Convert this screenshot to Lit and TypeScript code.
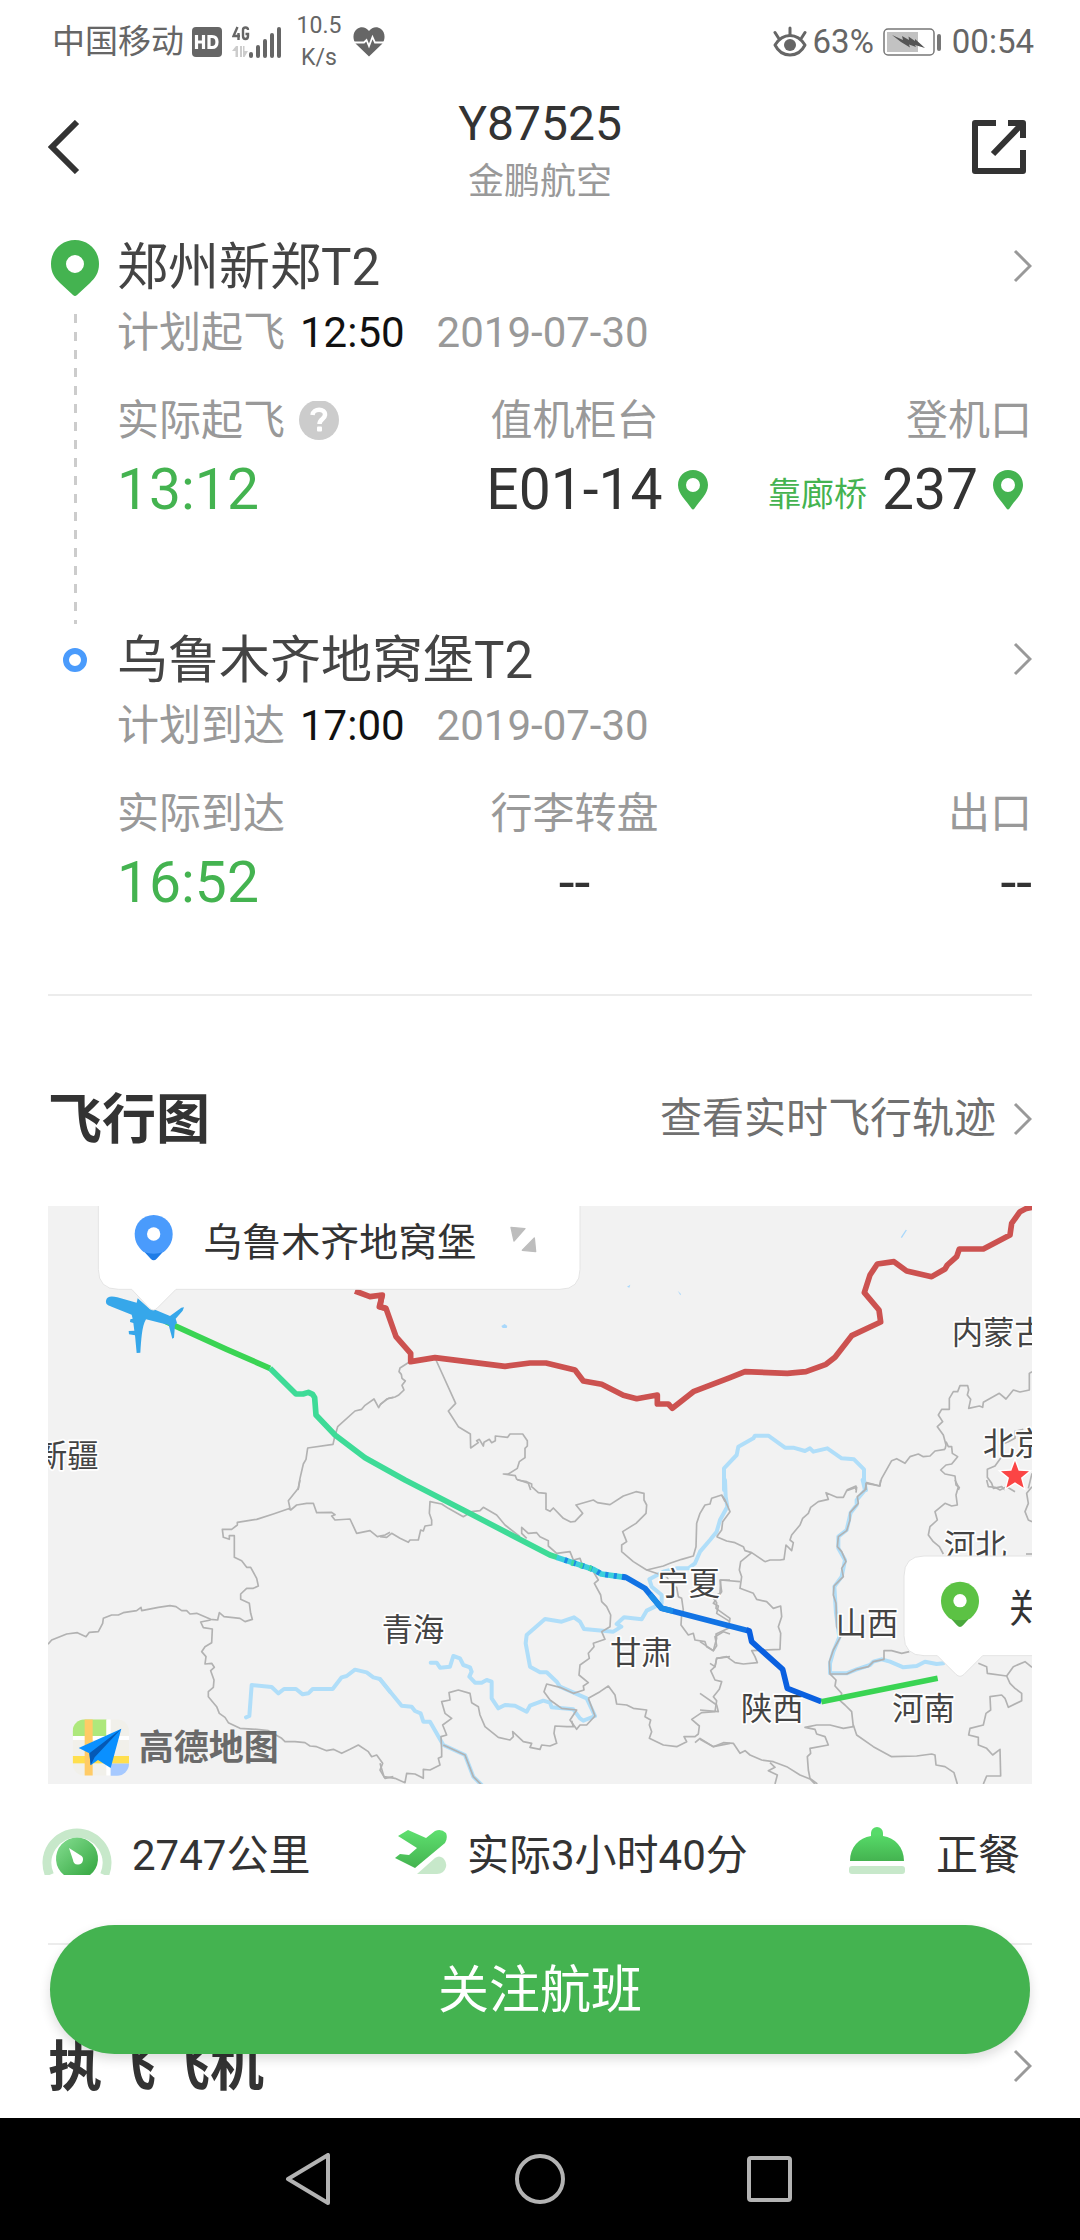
import { LitElement, html, svg, css, nothing } from "lit";
import { customElement, property } from "lit/decorators.js";

const chevron = html`<svg class="chevron" width="20" height="34" viewBox="0 0 20 34" aria-hidden="true">
  <path d="M3 2 L18 17 L3 32" fill="none" stroke="#999" stroke-width="3" />
</svg>`;

const smallPin = html`<svg width="30" height="40" viewBox="0 0 30 40" aria-hidden="true">
  <path fill="#44b350" fill-rule="evenodd"
    d="M15 0 C6.500 0 0 6.500 0 15 C0 24 8 30 13.500 38.500 Q15 40.500 16.500 38.500 C22 30 30 24 30 15 C30 6.500 23.500 0 15 0 Z M15 8 a7 7 0 1 1 0 14 a7 7 0 1 1 0 -14 Z" />
</svg>`;

/* The map is drawn on a 2952 x 1734 canvas, split into six tiles. */
type Tile = { x: number; y: number; borders?: string[]; rivers?: string[]; frontier?: string[] };

const tiles: Tile[] = [
  {
    x: -24, y: -48,
    borders: ["774,900 780,865 790,822 798,808 803,774 879,763 883,745 893,710 945,663 965,658 975,646 1002,627 1016,653 1022,642 1045,625 1060,622"],
    frontier: ["945,303 990,320 1027,315 1018,350 1035,355"],
  },
  {
    x: 996, y: -48,
    borders: [
      "0,645 20,627 45,621 55,616 72,600 66,586 76,573 66,565 64,553 57,545 60,534 88,516",
      "168,510 227,640 205,663 235,710 271,732 272,774 295,758 290,752 298,748 310,768 312,757 328,748 335,758 346,752 346,738 383,742 390,732 428,732 442,752 442,768 435,775 435,803 418,815 412,835 385,852 370,852 406,857 410,868 445,880 452,900",
    ],
    frontier: ["7,310 0,350 18,355 48,440 92,490 92,515 165,503 375,529 450,519 498,519 585,540 610,573 665,583 730,616 770,626 832,615 832,642 865,642 877,655 940,605 1050,563 1095,545 1222,550 1278,545 1338,523 1365,502 1415,437 1502,396 1497,360 1453,308 1470,255 1492,222 1542,215 1580,243 1655,260 1695,237 1702,225 1730,200 1738,177 1810,177 1890,135 1895,100 1920,65 1940,55 1970,50"],
  },
  {
    x: 1956, y: -48,
    borders: [
      "996,545 988,550 988,600 960,606 940,600 918,627 898,610 850,637 848,652 838,648 806,655 812,628 802,615 806,600 803,587 780,587 773,605 760,605 748,625 748,658 725,658 715,675 728,695 712,710 730,735 738,765 735,778",
      "738,755 745,770 755,770 757,790 773,800 755,822 738,825 722,840 735,852 765,858 768,885 778,892 775,900",
      "498,900 498,880 520,884 538,888 545,865 575,812 590,806 615,820 630,800 655,792 670,800 690,798 705,783 735,778",
      "996,850 985,895",
      "970,718 945,724 945,745 925,755 900,765 905,800 885,828 862,838 862,862 875,880 880,895 905,890 915,900",
      "440,900 468,888 468,900",
    ],
    rivers: ["72,900 72,835 110,795 115,770 160,745 165,737 205,737 255,773 280,773 315,783 330,775 340,785 382,775 425,805 462,808 492,838 492,870 498,900"],
  },
  {
    x: -24, y: 822,
    borders: [
      "24,493 35,480 80,462 112,458 138,470 148,457 175,455 188,430 190,415 215,405 235,405 250,398 290,392 303,382 305,392 355,382 390,377 408,380 425,392 440,392 450,402 470,400 512,418 533,420 538,398 552,410 600,415 615,425 637,418 632,400 628,370 602,358 602,342 620,325 640,325 655,318 650,295 632,262 620,262 605,242 583,232 583,167 568,167 568,178 550,172 547,148 575,148 592,135 592,127 650,118 700,102 750,85 745,62 775,25 780,0",
      "745,85 752,90 770,75 800,70 820,70 830,98 875,97 885,104 875,108 885,120 930,117 950,160 990,152 1012,170 1035,165 1050,157",
      "512,420 482,426 490,443 517,447 515,488 495,500 485,515 498,530 495,552 515,550 523,562 512,572 522,600 520,622 505,635 505,650 530,680 538,700 555,712 565,728 600,745 650,748 685,752 725,775 735,785 765,785 795,788 810,798 830,800 860,812 880,808 905,820 930,808 955,795 985,815 995,830 1010,825 1028,850 1020,870 1035,895 1060,890",
    ],
    rivers: ["618,712 628,708 635,615 695,621 715,640 732,627 768,627 788,643 805,640 818,627 878,627 905,592 920,588 945,569 980,577 1000,592 1020,597 1050,635"],
  },
  {
    x: 996, y: 822,
    borders: [
      "412,0 440,5 455,12 455,20 475,38 498,40 498,88 510,94 520,84 550,115 572,126 585,124 608,100 588,75 640,60 652,68 690,74 730,48 768,35 792,40 792,60 800,75 798,100 768,130 728,155 740,185 725,195 725,215 760,245 800,270 850,258 870,250 905,238 940,228 948,200 950,130 960,100 975,75 990,72 995,55 1025,45 1035,65",
      "0,170 20,172 35,160 60,175 85,187 90,180 115,180 122,150 130,153 135,138 155,135 155,120 148,100 150,65 185,72 205,85 250,110 275,95 300,92 310,82 350,105 375,135 420,170",
      "440,175 425,160 425,142 445,160 470,158 480,170 505,182 505,198 530,220 570,215 580,240 600,235 605,250",
      "640,275 655,300 643,310 662,345 665,365 680,380 692,405 690,440 665,455 675,478 640,490 642,500 625,520 628,535 600,555 597,585 625,608 610,618 612,630 580,640 540,622 500,612 492,635 510,660 545,685 590,690 570,720 590,748 600,735 620,735 645,708 625,655",
      "800,270 860,290 875,318 890,322 895,350 905,355 910,390 905,400 903,435 925,465 940,460 945,480 975,485 980,500 1000,512 1010,497 1005,470 1030,455 1050,462",
      "1050,300 1020,300 1025,335 1000,370 1015,378 1010,400 1050,425",
      "1050,530 1010,535 1005,560 992,572 1005,600 1025,605 1018,628 1000,650 1010,662 1005,695 965,698 935,718 958,738 955,762 945,770 912,770 920,785 890,800 850,795 808,775 815,755 808,735 812,720 795,710 800,690 760,685 740,675 710,672 705,645 685,618 660,635 625,655",
      "945,788 960,775 1000,800 1050,790",
      "185,810 183,770 200,765 188,735 215,715 195,700 185,665 210,660 207,638 235,630 270,640 275,668 295,680 300,705 315,740 355,772 390,780 400,770 398,755 430,785 455,790 450,802 480,808 485,795 510,798 530,790 522,760 525,738 560,740 580,740 575,722",
      "185,810 185,830 175,835 180,855 150,870 130,868 130,895 105,882 80,880 75,908 45,895 12,890 0,850",
      "190,795 255,825 280,890 305,915",
    ],
    rivers: [
      "1035,0 1037,50 1042,80 1020,120 1010,155 990,180 960,215 945,250 925,265 890,265 850,275 808,298 815,320 845,345 845,370 800,392 785,418 732,412 710,432 724,440 700,455 612,447 600,425 582,412 545,425 495,417 440,465 437,490 450,560 480,577 500,577 530,605 540,620 620,655 645,708 610,722 600,715 580,688 515,682 510,668 490,662 450,677 440,695 405,677 375,675 355,685 335,655 335,605 320,600 305,608 285,608 268,590 275,575 270,562 250,555 240,535 220,528 210,560 180,563 170,548 152,548",
      "0,598 65,677 95,680 105,693 122,700 130,725 150,725 190,795 255,825 280,890 305,915",
    ],
  },
  {
    x: 1956, y: 822,
    borders: [
      "50,170 65,150 68,125 90,95 75,60 65,45",
      "50,170 80,183 105,188 130,200 135,212 155,218 195,245 210,240 240,240 252,238 258,195 275,212 280,188 270,180 275,165 300,135 308,115 325,100 332,82 355,65 385,58 378,38 410,52 430,52 440,32 470,22 468,38",
      "155,218 122,245 118,270 125,290 120,325 160,340 170,358 200,365 220,385 242,378 245,410 235,440 242,460 240,508 155,512 165,530 172,548 130,552 105,548 80,530 50,535 45,560 30,550",
      "120,305 62,300 60,340 38,352 50,368 48,385 90,415 85,445 48,462 50,475 40,512 0,485",
      "765,0 775,20 768,45 772,75 755,78 735,70 705,95 712,120 690,140 685,165 700,185 718,200 730,222",
      "860,0 865,20 885,22 900,30 920,20 945,35",
      "996,20 980,40 985,70 975,95 985,120 996,125",
      "978,222 996,222",
      "835,550 860,560 862,580 920,588 940,560 975,545 996,562",
      "920,588 930,610 945,625 965,640 965,662 925,682 915,655 905,645 870,650 872,690 858,700 850,735 810,745 806,765 835,772 835,795 860,805 878,825 900,808 902,888 860,888 850,912",
      "390,582 408,600 405,618 425,640 420,662 435,675 455,695 460,740 430,745 390,735 350,735 315,742 345,748 350,762 375,770 385,795 330,805 332,820 322,830 325,870 330,895 352,912",
      "460,735 470,765 520,800 575,830 650,828 695,822 705,825 708,855 735,860 762,878 772,912",
      "0,778 40,800 70,788 100,790 120,820 135,812 150,825 185,840 220,845 260,860 300,885 330,897 345,912",
      "210,848 225,862 205,872 232,885 225,912",
      "628,515 605,520 575,512 552,512 552,538 520,545 505,560 470,568 440,582 390,582 388,545 400,510 422,470 410,440 408,370 400,345 402,318 430,290 425,265 438,245 425,215 412,200 415,170 440,152 450,120 450,98 475,70 472,50 495,30 500,8 540,18 542,0",
      "0,690 55,695 50,675 0,640",
    ],
    rivers: [
      "488,0 495,30 470,60 470,75 452,98 440,150 415,170 415,205 435,240 425,290 403,320 408,400 418,472 400,515 390,550 390,580 440,580 470,568 510,555 520,545 545,538 570,545 610,562 650,558 675,545 710,552 730,550",
    ],
  },
];

const places: [string, number, number][] = [
  ["新疆", -36, 783],
  ["内蒙古", 2711, 415],
  ["北京", 2805, 746],
  ["宁夏", 1828, 1166],
  ["青海", 1001, 1306],
  ["甘肃", 1686, 1374],
  ["山西", 2363, 1286],
  ["陕西", 2079, 1543],
  ["河南", 2533, 1543],
  ["河北", 2688, 1052],
];

@customElement("route-map")
export class RouteMap extends LitElement {
  static styles = css`
    :host { display: block; overflow: hidden; background: #f2f2f2; }
    .canvas { display: block; width: 100%; height: auto; font-family: Roboto, "Noto Sans CJK SC", sans-serif; }
    .border { fill: none; stroke: #b2b2b2; stroke-width: 5; stroke-linejoin: round; }
    .river { fill: none; stroke: #b0def9; stroke-width: 12; stroke-linejoin: round; stroke-linecap: round; }
    .frontier { fill: none; stroke: #cc5250; stroke-width: 17; stroke-linejoin: round; }
    .route { fill: none; stroke-width: 17; stroke-linejoin: round; }
    .place { font-size: 94px; fill: #444; stroke: #fff; stroke-width: 10; stroke-linejoin: round; paint-order: stroke; }
    .callout { fill: #fff; stroke: #e4e4e4; stroke-width: 3; }
    .airport { font-size: 117px; fill: #333; }
    .brand { font-size: 105px; font-weight: 700; fill: #6a6a6a; }
  `;

  private pin(x: number, y: number, body: string, tip: string) {
    return svg`<g transform="translate(${x} ${y})">
      <path fill=${tip} d="M-42 38 L-9 74 Q0 84 9 74 L42 38 Z" />
      <path fill=${body} d="M0 -57 C32 -57 57 -32 57 0 C57 26 44 42 30 54 Q0 64 -30 54 C-44 42 -57 26 -57 0 C-57 -32 -32 -57 0 -57 Z" />
      <circle r="20" fill="#fff" />
    </g>`;
  }

  private lines(kind: "borders" | "rivers" | "frontier", cls: string) {
    return tiles.map((t) => svg`<g transform="translate(${t.x} ${t.y})">
      ${(t[kind] ?? []).map((p) => svg`<polyline class=${cls} points=${p} />`)}
    </g>`);
  }

  render() {
    return html`<svg class="canvas" viewBox="0 0 2952 1734" role="img" aria-label="飞行图">
      ${this.lines("rivers", "river")}
      ${this.lines("borders", "border")}
      ${this.lines("frontier", "frontier")}
      <g fill="#a9d8fb">
        <path d="M1360 360 l10 -6 l8 6 l-2 6 l-12 0 Z M1737 242 l10 -6 l-3 9 Z M1889 254 l10 10 l-2 4 Z" />
        <path d="M2560 95 l15 -23" stroke="#a9d8fb" stroke-width="4" />
      </g>
      ${places.map(([name, x, y]) => svg`<text class="place" x=${x} y=${y}>${name}</text>`)}
      <path fill="#fb4545" stroke="#fff" stroke-width="8" paint-order="stroke"
        d="M2901 765 L2912 794 L2943 796 L2919 815 L2927 845 L2901 829 L2875 845 L2883 815 L2859 796 L2890 794 Z" />

      <polyline class="route" stroke="#3ad453" points="350,345 386,362 536,430 666,487" />
      <polyline class="route" stroke="#3edb97" points="666,487 744,564 765,564 781,559 794,565 800,575 804,627 861,687 951,755 1071,822 1246,912 1506,1047 1530,1055" />
      <polyline class="route" stroke="#3bd0dc" points="1526,1054 1636,1090 1660,1104 1731,1114" />
      <polyline class="route" stroke="#1c8ae6" stroke-dasharray="9 17" points="1550,1062 1636,1090 1660,1104 1731,1114" />
      <polyline class="route" stroke="#3edba0" stroke-dasharray="8 20" points="1570,1070 1636,1090" />
      <polyline class="route" stroke="#1273e4" points="1722,1112 1734,1114 1791,1147 1841,1207 1956,1237 2101,1274" />
      <polyline class="route" stroke="#1c8ce8" points="1806,1165 1841,1207 1875,1215" />
      <polyline class="route" stroke="#0a60e0" points="2095,1272 2104,1275 2111,1307 2204,1390 2218,1447 2320,1487" />
      <polyline class="route" stroke="#3ad453" points="2320,1487 2669,1417" />

      <path fill="#36a7ea" transform="translate(-24 -48)"
        d="M198 332 C200 318 215 318 232 322 L290 338 L293 325 L330 358 L347 360 L390 378 L424 353 L432 352 L428 362 L407 386 L411 398 L405 405 L402 443 L397 446 L386 405 L318 388 C305 410 304 450 301 488 L290 489 L285 436 L267 433 L266 423 L283 422 L280 399 L270 396 L271 388 L278 386 L275 374 L215 350 C200 345 197 340 198 332 Z" />

      <path class="callout" d="M151 -20 V190 Q151 250 211 250 H251 L304 306 Q316 318 328 306 L384 250 H1536 Q1596 250 1596 190 V-20 Z" />
      ${this.pin(317, 84, "#4a9bfc", "#1f7ce6")}
      <text class="airport" x="466" y="149">乌鲁木齐地窝堡</text>
      <path fill="#bdbdbd" stroke="#bdbdbd" stroke-width="4" stroke-linejoin="round"
        d="M1389 64 L1431 68 L1398 105 Z M1463 137 L1423 133 L1459 96 Z" />

      <path class="callout" d="M2980 1050 H2628 Q2568 1050 2568 1110 V1289 Q2568 1349 2628 1349 H2668 L2724 1405 Q2736 1417 2748 1405 L2804 1349 H2980 Z" />
      ${this.pin(2736, 1184, "#5cc244", "#4aa83c")}
      <text class="airport" x="2884" y="1247">郑</text>

      <g transform="translate(74 1540)">
        <clipPath id="tile"><rect width="169" height="169" rx="36" /></clipPath>
        <g clip-path="url(#tile)">
          <rect width="169" height="169" fill="#f1f0ea" />
          <rect width="102" height="52" fill="#aee87c" />
          <rect x="101" width="13" height="169" fill="#fff" />
          <rect y="50" width="169" height="12" fill="#fff" />
          <rect x="114" y="132" width="55" height="40" fill="#a6c9ff" />
          <rect y="110" width="169" height="22" fill="#ffdf4d" />
          <rect x="36" width="24" height="169" fill="#ffcb66" />
        </g>
        <path fill="#0a90ff" d="M146 28 L18 86 L50 102 L54 138 L76 122 L114 146 Z" />
        <path fill="#0559b5" d="M146 28 L50 102 L54 138 L66 114 Z" />
      </g>
      <text class="brand" x="272" y="1661">高德地图</text>
    </svg>`;
  }
}

interface Fact {
  label: string;
  value: string;
  tone?: string;
  note?: string;
  help?: boolean;
  pin?: boolean;
}

@customElement("flight-leg")
export class FlightLeg extends LitElement {
  @property() place = "";
  @property() planLabel = "";
  @property() planTime = "";
  @property() date = "";
  @property({ type: Boolean }) origin = false;
  @property({ attribute: false }) facts: Fact[] = [];

  static styles = css`
    :host { display: block; }
    * { box-sizing: border-box; }
    button { border: 0; background: none; padding: 0; font: inherit; color: inherit; display: block; }
    svg { display: block; }
    .leg { display: grid; grid-template-columns: 54px 1fr; column-gap: 15px; }
    .rail { display: flex; flex-direction: column; align-items: center; }
    .pin { margin: 5px 0 18px; }
    .dashes { width: 3px; flex: 1; margin-bottom: 4px; background: repeating-linear-gradient(#ccc 0 9px, transparent 9px 18px); }
    .ring { width: 24px; height: 24px; border: 6px solid #4a9bfc; border-radius: 50%; margin-top: 20px; }
    .title { display: flex; align-items: flex-start; justify-content: space-between; color: #444; text-decoration: none; font-size: 51px; line-height: 66px; }
    .chevron { margin-top: 14px; }
    .name { margin: 0; font: inherit; }
    .plan { display: flex; margin: 8px 0 0; font-size: 42px; line-height: 48px; color: #999; }
    .time { color: #111; margin-left: 15px; }
    .date { margin-left: 32px; }
    .facts { display: grid; grid-template-columns: 1fr auto 1fr; margin: 40px 0 0; }
    .origin .facts { margin-bottom: 106px; }
    .fact { display: flex; flex-direction: column; gap: 13px; }
    .fact:nth-child(2) { align-items: center; }
    .fact:nth-child(3) { align-items: flex-end; }
    .label { display: flex; align-items: center; gap: 14px; margin: 0; font-size: 42px; line-height: 48px; color: #999; }
    .value { display: flex; align-items: center; margin: 0; font-size: 57px; line-height: 64px; color: #333; white-space: nowrap; }
    .green { color: #44b350; }
    .note { font-size: 33px; margin-right: 15px; padding-top: 10px; line-height: 48px; color: #44b350; }
    .locate { margin-left: 15px; }
    .fact:nth-child(2) .locate { margin-right: -45px; }
    .fact:nth-child(3) .locate { margin-right: 9px; }
  `;

  render() {
    return html`<article class="leg ${this.origin ? "origin" : ""}">
      <div class="rail">
        ${this.origin
          ? html`<svg class="pin" width="48" height="56" viewBox="0 0 48 56" aria-hidden="true">
                <path fill="#44b350" fill-rule="evenodd"
                  d="M24 0 C10.500 0 0 10.500 0 24 C0 33 4 38 9 43 L22 55 Q24 57 26 55 L39 43 C44 38 48 33 48 24 C48 10.500 37.500 0 24 0 Z M24 15 a9 9 0 1 1 0 18 a9 9 0 1 1 0 -18 Z" />
              </svg>
              <span class="dashes"></span>`
          : html`<span class="ring"></span>`}
      </div>
      <div>
        <a class="title" href="#airport"><h2 class="name">${this.place}</h2>${chevron}</a>
        <p class="plan"><span>${this.planLabel}</span><span class="time">${this.planTime}</span><span class="date">${this.date}</span></p>
        <dl class="facts">
          ${this.facts.map((f) => html`<div class="fact">
            <dt class="label">${f.label}${f.help
              ? html`<button aria-label="说明"><svg width="40" height="40" viewBox="0 0 40 40">
                  <circle cx="20" cy="19" r="20" fill="#ccc" />
                  <path d="M13.500 14 C14 7 26.500 7 26 14 C25.800 18 20.500 18 20.500 23" fill="none" stroke="#fff" stroke-width="4.500" />
                  <rect x="18" y="25.500" width="5" height="5" rx="1" fill="#fff" />
                </svg></button>` : nothing}</dt>
            <dd class="value ${f.tone ?? ""}">${f.note ? html`<span class="note">${f.note}</span>` : nothing}${f.value}${f.pin
              ? html`<button class="locate" aria-label=${f.label}>${smallPin}</button>` : nothing}</dd>
          </div>`)}
        </dl>
      </div>
    </article>`;
  }
}

const departure: Fact[] = [
  { label: "实际起飞", value: "13:12", tone: "green", help: true },
  { label: "值机柜台", value: "E01-14", pin: true },
  { label: "登机口", value: "237", note: "靠廊桥", pin: true },
];

const arrival: Fact[] = [
  { label: "实际到达", value: "16:52", tone: "green" },
  { label: "行李转盘", value: "--" },
  { label: "出口", value: "--" },
];

@customElement("app-root")
export class AppRoot extends LitElement {
  static styles = css`
    :host {
      display: flex; flex-direction: column; height: 100vh; overflow: hidden;
      background: #fff; color: #333;
      font-family: Roboto, "Noto Sans CJK SC", sans-serif;
    }
    * { box-sizing: border-box; }
    button { border: 0; background: none; padding: 0; font: inherit; color: inherit; display: block; }
    svg { display: block; flex: none; }
    .status { display: flex; align-items: center; height: 84px; padding: 0 46px 0 52px; font-size: 33px; line-height: 40px; color: #666; }
    .hd { margin-left: 8px; }
    .signal { margin: 0 13px 0 10px; }
    .rate { width: 46px; font-size: 23px; line-height: 32px; text-align: center; margin-right: 11px; }
    .spacer { flex: 1; }
    .battery { margin: 0 10px 0 9px; }
    .eye { margin-right: 6px; }
    .header { display: flex; align-items: center; justify-content: space-between; padding: 12px 48px 4px; }
    .tool { padding-bottom: 8px; width: 60px; }
    .heading { text-align: center; }
    .flight { margin: 0; font-size: 48px; line-height: 56px; font-weight: 400; }
    .airline { margin: 6px 0 0; font-size: 36px; line-height: 48px; color: #999; }
    .stage { position: relative; flex: 1; min-height: 0; display: flex; flex-direction: column; }
    .content { flex: 1; min-height: 0; overflow: hidden; padding: 25px 48px 0; }
    .rule { height: 2px; border: 0; margin: 0; background: #ececec; }
    .after-legs { margin-top: 79px; }
    .section { display: flex; align-items: center; justify-content: space-between; color: #707070; text-decoration: none; font-size: 42px; line-height: 64px; }
    .flightmap { margin: 89px 0 53px; }
    .plane { margin: 87px 0 0; }
    .section-title { margin: 0; padding-top: 4px; font-size: 54px; line-height: 64px; font-weight: 700; color: #333; }
    .more { display: flex; align-items: center; gap: 16px; }
    .stats { display: grid; grid-template-columns: 353fr 454fr 183fr; list-style: none; margin: 39px 0 55px -6px; padding: 0; font-size: 42px; line-height: 64px; }
    .stat { display: flex; align-items: flex-end; gap: 20px; white-space: nowrap; }
    .stat svg { margin-bottom: 13px; }
    .wide { gap: 31px; }
    .follow {
      position: absolute; left: 50px; right: 50px; bottom: 64px; height: 129px; border-radius: 65px;
      padding-top: 2px; background: #44b350; color: #fff; font-size: 51px; line-height: 64px;
      box-shadow: 0 5px 12px rgba(0, 0, 0, 0.14);
    }
    .keys { display: flex; justify-content: center; align-items: center; gap: 180px; height: 122px; background: #000; flex: none; }
  `;

  render() {
    return html`
      <div class="status">
        <span>中国移动</span>
        <svg class="hd" width="30" height="30" viewBox="0 0 30 30" role="img" aria-label="HD">
          <rect width="30" height="30" rx="4" fill="#666" />
          <path d="M4.500 8 V22 M11.500 8 V22 M4.500 15 H11.500" stroke="#fff" stroke-width="3.200" fill="none" />
          <path d="M17 9.500 H20 Q25 9.500 25 15 Q25 20.500 20 20.500 H17 Z" stroke="#fff" stroke-width="3.200" fill="none" />
        </svg>
        <svg class="signal" width="51" height="34" viewBox="0 0 51 34" role="img" aria-label="4G">
          <path d="M5.500 2 L1.500 11 H8 M6.500 8 V15" stroke="#666" stroke-width="2.400" fill="none" />
          <path d="M16 5 Q16 2.500 13.500 2.500 Q11 2.500 11 5 V11 Q11 14 13.500 14 Q16 14 16 11 V9 H13.500" stroke="#666" stroke-width="2.400" fill="none" />
          <path d="M0 26 L4 21 H6 V32 H3.500 V26 Z M8 21 H10 V32 H8 Z M11 21 H12.500 V26 H16 L12.500 32 H11 Z" fill="#ccc" />
          <g fill="#666">
            <rect x="17" y="27" width="4" height="6" rx="2" /><rect x="24" y="20" width="4" height="13" rx="2" />
            <rect x="31" y="14" width="4" height="19" rx="2" /><rect x="38" y="8" width="4" height="25" rx="2" />
            <rect x="45" y="2" width="4" height="31" rx="2" />
          </g>
        </svg>
        <span class="rate">10.5 K/s</span>
        <svg width="32" height="30" viewBox="0 0 32 30" aria-hidden="true">
          <path fill="#666" d="M16 29.500 L3 17 C-1 12 0 5 4 2 C8 -1 13 0 16 4 C19 0 24 -1 28 2 C32 5 33 12 29 17 Z" />
          <path d="M1 15.500 H11 L13.500 13 L16 19 L19.500 10 L22 15.500 H31" fill="none" stroke="#fff" stroke-width="1.800" />
        </svg>
        <span class="spacer"></span>
        <svg class="eye" width="34" height="32" viewBox="0 0 34 32" aria-hidden="true">
          <path d="M2 19 Q8 9.500 17 9.500 Q26 9.500 32 19 Q27 29 17 29 Q7 29 2 19 Z" fill="none" stroke="#666" stroke-width="3" stroke-linejoin="round" />
          <circle cx="17" cy="19" r="6" fill="#666" />
          <path d="M17 9 V2 M5.500 12 L2 6.500 M28.500 12 L32 6.500" stroke="#666" stroke-width="3" stroke-linecap="round" />
        </svg>
        <span>63%</span>
        <svg class="battery" width="59" height="28" viewBox="0 0 59 28" aria-hidden="true">
          <rect x="1" y="1" width="50" height="26" rx="4" fill="#fff" stroke="#777" stroke-width="1.500" />
          <rect x="4" y="4" width="31" height="20" fill="#c2c2c2" />
          <path fill="#555" d="M9 7 L20 12 L19 8 L26 12 L25.500 8.500 L32 13 L32 11 L42 20 L32 17 L33 19 L26 16.500 L27 19.500 L18 14 Z" />
          <rect x="54" y="6" width="4" height="17" rx="2" fill="#777" />
        </svg>
        <span>00:54</span>
      </div>

      <header class="header">
        <button class="tool" aria-label="返回">
          <svg width="32" height="54" viewBox="0 0 32 54"><path d="M29 2 L4 27 L29 52" fill="none" stroke="#333" stroke-width="6" /></svg>
        </button>
        <div class="heading">
          <h1 class="flight">Y87525</h1>
          <p class="airline">金鹏航空</p>
        </div>
        <button class="tool" aria-label="分享">
          <svg width="54" height="54" viewBox="0 0 54 54">
            <path d="M24 3 H3 V51 H51 V30 M36 3 H51 V18 M50 4 L21 34" fill="none" stroke="#333" stroke-width="6" stroke-linejoin="round" />
          </svg>
        </button>
      </header>

      <div class="stage">
        <main class="content">
          <flight-leg origin place="郑州新郑T2" planLabel="计划起飞" planTime="12:50" date="2019-07-30" .facts=${departure}></flight-leg>
          <flight-leg place="乌鲁木齐地窝堡T2" planLabel="计划到达" planTime="17:00" date="2019-07-30" .facts=${arrival}></flight-leg>
          <hr class="rule after-legs" />
          <a class="section flightmap" href="#track">
            <h2 class="section-title">飞行图</h2>
            <span class="more">查看实时飞行轨迹${chevron}</span>
          </a>
          <route-map></route-map>
          <ul class="stats">
            <li class="stat">
              <svg width="70" height="52" viewBox="0 0 70 52" aria-hidden="true">
                <defs><linearGradient id="gauge" x1="0" y1="0" x2="1" y2="1"><stop offset="0.1" stop-color="#7ed98a" /><stop offset="0.85" stop-color="#3fae4b" /></linearGradient></defs>
                <path d="M7.500 52 A30 30 0 1 1 62.500 52" fill="none" stroke="#c7e8ca" stroke-width="9" />
                <path d="M22 52 A21 21 0 1 1 48 52 Z" fill="url(#gauge)" />
                <path d="M27 25 L38 32 A5 5 0 1 1 31 37 Z" fill="#fff" />
              </svg>
              <span>2747公里</span>
            </li>
            <li class="stat">
              <svg width="52" height="46" viewBox="0 0 52 46" aria-hidden="true">
                <defs><linearGradient id="jet" x1="0" y1="0" x2="0" y2="1"><stop offset="0" stop-color="#5ee06f" /><stop offset="1" stop-color="#44b350" /></linearGradient></defs>
                <path fill="url(#jet)" d="M3 7 L13 1 L31 9 L40 2 Q46 -1 51 4 Q53 9 50 14 L20 39 L0 29 L5 25 L14 26 L22 19 Z" />
                <path fill="#c7e8ca" d="M22 45 L40 29 Q44 26 48 29 Q52 33 51 38 Q49 45 42 45 Z" />
              </svg>
              <span>实际3小时40分</span>
            </li>
            <li class="stat wide">
              <svg width="56" height="48" viewBox="0 0 56 48" aria-hidden="true">
                <defs><linearGradient id="dish" x1="0" y1="0" x2="0" y2="1"><stop offset="0.2" stop-color="#57db69" /><stop offset="1" stop-color="#44b350" /></linearGradient></defs>
                <path fill="url(#dish)" d="M1 34 C1 20 10 11 22 9 V6 A6 6 0 0 1 34 6 V9 C46 11 55 20 55 34 Z" />
                <rect y="39" width="56" height="8" rx="3" fill="#c7e8ca" />
              </svg>
              <span>正餐</span>
            </li>
          </ul>
          <hr class="rule" />
          <a class="section plane" href="#aircraft">
            <h2 class="section-title">执飞飞机</h2>
            ${chevron}
          </a>
        </main>
        <button class="follow">关注航班</button>
      </div>

      <nav class="keys">
        <button aria-label="后退"><svg width="50" height="52" viewBox="0 0 50 52"><path d="M43 2 V50 L3 26 Z" fill="none" stroke="#b3b3b3" stroke-width="4" stroke-linejoin="round" /></svg></button>
        <button aria-label="主页"><svg width="50" height="52" viewBox="0 0 50 52"><circle cx="25" cy="26" r="23" fill="none" stroke="#b3b3b3" stroke-width="4" /></svg></button>
        <button aria-label="最近任务"><svg width="50" height="52" viewBox="0 0 50 52"><rect x="4" y="5" width="41" height="42" rx="2" fill="none" stroke="#b3b3b3" stroke-width="4" /></svg></button>
      </nav>
    `;
  }
}
